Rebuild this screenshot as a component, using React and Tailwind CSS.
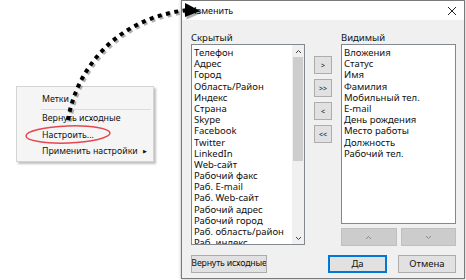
import React from 'react';

const hidden = [
  'Телефон', 'Адрес', 'Город', 'Область/Район', 'Индекс', 'Страна', 'Skype', 'Facebook',
  'Twitter', 'LinkedIn', 'Web-сайт', 'Рабочий факс', 'Раб. E-mail', 'Раб. Web-сайт',
  'Рабочий адрес', 'Рабочий город', 'Раб. область/район', 'Раб. индекс',
];

const visible = [
  'Вложения', 'Статус', 'Имя', 'Фамилия', 'Мобильный тел.', 'E-mail', 'День рождения',
  'Место работы', 'Должность', 'Рабочий тел.',
];

const font = { fontFamily: '"Noto Sans", "Open Sans", sans-serif' };

function MoveButton({ children }) {
  return (
    <button className="w-[18px] h-[18px] flex items-center justify-center bg-[#e1e1e1] border border-[#adadad] text-[7px] leading-none text-[#222]">
      {children}
    </button>
  );
}

function Chevron({ up, color = '#444' }) {
  return (
    <svg width="7" height="5" viewBox="0 0 7 5">
      <path d={up ? 'M1 4 L3.5 1.5 L6 4' : 'M1 1 L3.5 3.5 L6 1'} fill="none" stroke={color} strokeWidth="1" />
    </svg>
  );
}

function ContextMenu() {
  return (
    <div className="w-[138px] mt-[86px] ml-[16px] bg-[#f5f5f5] border border-[#d4d4d4] shadow-[2px_2px_2px_rgba(0,0,0,0.25)] text-[8.8px] text-[#111] pt-[4px] pb-[1px]">
      <div className="h-[16.5px] pl-[25px] flex items-center whitespace-nowrap">Метки</div>
      <div className="ml-[24px] mr-[2px] my-[1px] border-t border-[#dcdcdc]" />
      <div className="h-[16.5px] pl-[25px] flex items-center whitespace-nowrap">Вернуть исходные</div>
      <div className="h-[16.5px] pl-[25px] flex items-center whitespace-nowrap">Настроить...</div>
      <div className="h-[16.5px] pl-[25px] pr-[6px] flex items-center justify-between whitespace-nowrap">
        <span>Применить настройки</span>
        <span className="text-[5px]">▶</span>
      </div>
    </div>
  );
}

function Dialog() {
  return (
    <div className="w-[284px] h-[279px] border border-[#7a7a7a] bg-[#f0f0f0] flex flex-col shadow-[0_0_3px_rgba(0,0,0,0.3)]">
      <div className="h-[19px] bg-white flex items-center justify-between pl-[8px] pr-[7px] text-[9px] text-[#111]">
        <span>Изменить</span>
        <svg width="10" height="10" viewBox="0 0 10 10">
          <path d="M1 1 L9 9 M9 1 L1 9" stroke="#222" strokeWidth="1" />
        </svg>
      </div>
      <div className="flex-1 pl-[9px] pr-[8px] pt-[12px] text-[9.5px] text-[#111]">
        <div className="flex">
          <div className="flex flex-col w-[114px]">
            <div className="h-[12px] leading-[11px]">Скрытый</div>
            <div className="h-[201px] bg-white border border-[#828790] flex overflow-hidden">
              <div className="flex-1 pt-[2px] pl-[2px] overflow-hidden">
                {hidden.map((h) => (
                  <div key={h} className="h-[11.2px] leading-[11.2px] whitespace-nowrap">{h}</div>
                ))}
              </div>
              <div className="w-[12px] bg-[#f0f0f0] flex flex-col items-center">
                <div className="h-[12px] flex items-center"><Chevron up /></div>
                <div className="w-[10px] h-[104px] bg-[#cdcdcd]" />
                <div className="flex-1" />
                <div className="h-[12px] flex items-center"><Chevron /></div>
              </div>
            </div>
          </div>
          <div className="w-[36px] flex flex-col items-center pt-[24px] gap-[5px]">
            <MoveButton>&gt;</MoveButton>
            <MoveButton>&gt;&gt;</MoveButton>
            <MoveButton>&lt;</MoveButton>
            <MoveButton>&lt;&lt;</MoveButton>
          </div>
          <div className="flex flex-col w-[115px]">
            <div className="h-[12px] leading-[11px]">Видимый</div>
            <div className="h-[180px] bg-white border border-[#828790] pt-[2px] pl-[2px]">
              {visible.map((v) => (
                <div key={v} className="h-[11.2px] leading-[11.2px] whitespace-nowrap">{v}</div>
              ))}
            </div>
            <div className="flex gap-[4px] mt-[4px]">
              <div className="flex-1 h-[18px] bg-[#cccccc] border border-[#bfbfbf] flex items-center justify-center"><Chevron up color="#8a8a8a" /></div>
              <div className="flex-1 h-[18px] bg-[#cccccc] border border-[#bfbfbf] flex items-center justify-center"><Chevron color="#8a8a8a" /></div>
            </div>
          </div>
        </div>
        <div className="flex mt-[9px]">
          <div className="w-[76px] h-[18px] bg-[#e1e1e1] border border-[#adadad] flex items-center justify-center overflow-hidden whitespace-nowrap text-[8.8px] tracking-[-0.2px]">
            Вернуть исходные
          </div>
          <div className="flex-1" />
          <div className="w-[59px] h-[18px] bg-[#e1e1e1] border-2 border-[#0078d7] flex items-center justify-center">Да</div>
          <div className="w-[58px] h-[18px] ml-[11px] bg-[#e1e1e1] border border-[#adadad] flex items-center justify-center">Отмена</div>
        </div>
      </div>
    </div>
  );
}

export default function App() {
  return (
    <div className="relative w-[466px] h-[280px] bg-white overflow-hidden flex" style={font}>
      <div className="w-[181px]">
        <ContextMenu />
      </div>
      <Dialog />
      <svg className="absolute left-0 top-0 pointer-events-none" width="466" height="280">
        <ellipse cx="68" cy="134.5" rx="42" ry="8.5" fill="none" stroke="#e5484d" strokeWidth="1.5" transform="rotate(-2 68 134.5)" />
        <g transform="translate(1.5 1.5)" opacity="0.3">
          <path d="M68 120 C 76 70, 115 18, 188 10" fill="none" stroke="#000" strokeWidth="4.5" strokeDasharray="4 4.5" />
          <polygon points="185,2 201,11 185,18" fill="#000" />
        </g>
        <path d="M68 120 C 76 70, 115 18, 188 10" fill="none" stroke="#000" strokeWidth="4" strokeDasharray="4 4.5" />
        <polygon points="185,3 200,11 185,17" fill="#000" />
      </svg>
    </div>
  );
}
